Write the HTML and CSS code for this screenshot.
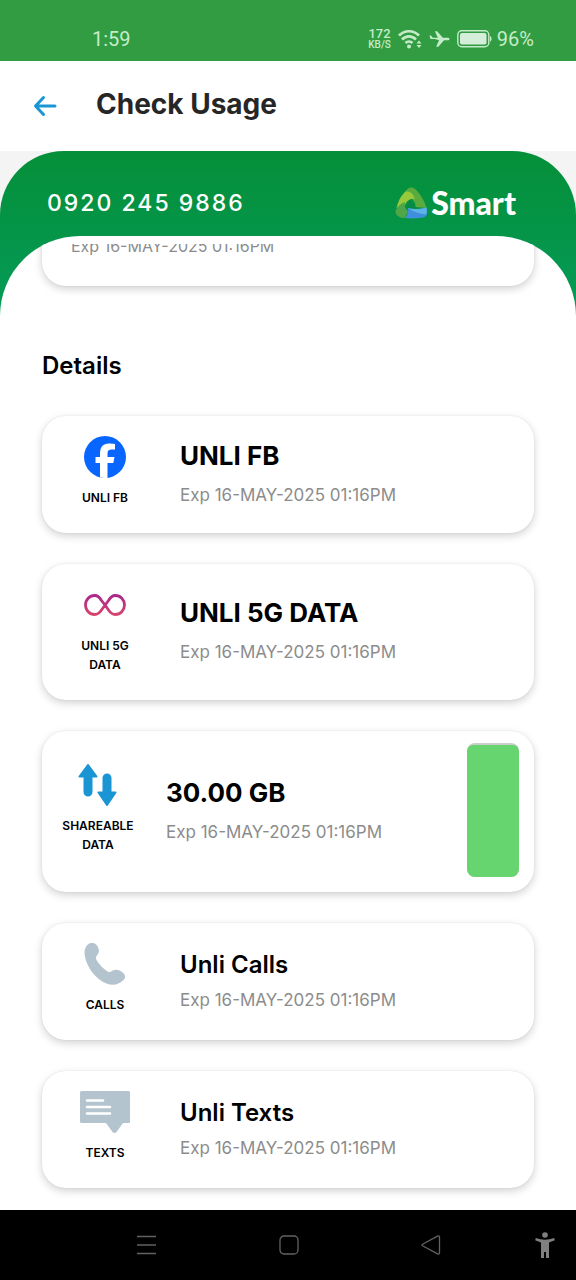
FILE: index.html
```html
<!DOCTYPE html>
<html lang="en">
<head>
<meta charset="utf-8">
<meta name="viewport" content="width=device-width, initial-scale=1">
<title>Check Usage</title>
<link rel="stylesheet" href="styles.css">
</head>
<body>
<div class="status">
  <span class="clock">1:59</span>
  <div class="indicators">
    <span class="speed"><b>172</b><small>KB/S</small></span>
    <svg class="wifi" viewBox="0 0 24 20" aria-hidden="true">
      <g fill="none" stroke="currentColor" stroke-width="2.700">
        <path d="M1 6.500C6.500.8 15.500.8 21 6.500"/>
        <path d="M4 10.500c4-4.200 10-4.200 14 0"/>
        <path d="M7.500 14c2-2 5-2 7 0"/>
      </g>
      <circle cx="11" cy="17.500" r="2" fill="currentColor"/>
      <path d="M18.500 14.500l2.500-3 2.500 3zM18.500 16l2.500 3 2.500-3z" fill="currentColor"/>
    </svg>
    <svg class="plane" viewBox="0 0 22 18" aria-hidden="true">
      <path d="M21.500 9c0-1-.9-1.400-2-1.400h-5L8.500.8H6.200l3 6.800H4L2 5.400H.5L1.500 9H5.500q3 .6 5 1.200l-3 7h2.300l6-6.800h3.700c1.100 0 2-.4 2-1.400z" fill="currentColor"/>
    </svg>
    <svg class="battery" viewBox="0 0 36 18" aria-hidden="true">
      <rect x=".8" y=".8" width="31" height="16" rx="4" fill="none" stroke="currentColor" stroke-width="1.400"/>
      <rect x="3" y="3" width="26.500" height="11.600" rx="2" fill="#d5eed9"/>
      <path d="M33 6c2 .6 2 5 0 5.600z" fill="currentColor"/>
    </svg>
    <span class="percent">96%</span>
  </div>
</div>

<header class="appbar">
  <button class="back" aria-label="Back">
    <svg viewBox="0 0 24 24" aria-hidden="true"><path d="M22 12H3M10.500 3.500L2.500 12l8 8.500" fill="none" stroke="currentColor" stroke-width="3" stroke-linecap="round" stroke-linejoin="round"/></svg>
  </button>
  <h1>Check Usage</h1>
</header>

<main class="backdrop">
  <div class="panel">
    <div class="account">
      <span class="number">0920 245 9886</span>
      <span class="brand">
        <svg viewBox="0 0 32 32" aria-hidden="true">
          <path d="M9 6C12 2 14 .5 16 .5c3 0 5 2 7 4.500 4 5 7 10 8.500 16l-11-1C21 16 18 12 15 11z" fill="#5aab3d"/>
          <path d="M9 6c3-3 7-1 9 2l2 4c-5-1-8 2-10 6L1.500 21C3 15 5 10 9 6z" fill="#98c83c"/>
          <path d="M10 15c-1 4 0 7 3 9l-3 7C5 31 1 29 .5 25.500.5 21 5 17 10 15z" fill="#4fa649"/>
          <path d="M13 21c6 2 12 1 18.500-.5C33 27 32 30 27 30.800c-6 .9-12 .9-17 .2 2-2 3-5 3-10z" fill="#3f8fdc"/>
          <path d="M13 21c6 2 12 1 18.500-.5.5 3 .5 5-.5 7-7-.5-12-2.500-18-6.500z" fill="#5db2e6"/>
          <path d="M15.500 13.500l5.500 7.500q-5 .8-9-.5 1-4.500 3.500-7z" fill="#078a43"/>
        </svg>
        <strong>Smart</strong>
      </span>
    </div>
    <div class="sheet">
      <div class="scroller">
        <section class="card summary"><p class="expiry">Exp 16-MAY-2025 01:16PM</p></section>
        <h2>Details</h2>
        <ul class="cards">
          <li class="card">
            <div class="kind">
              <svg viewBox="0 0 42 42" aria-hidden="true"><circle cx="21" cy="21" r="21" fill="#0866ff"/><path d="M16 41.500V27h-4.500v-6H16v-3.500C16 11 19 7.500 25 7.500c2.500 0 4.500.2 6 .6v5.400h-3.500c-3 0-4 1.200-4 4V21h7l-1.200 6h-5.800v14.800c-2.500.4-5 .2-7.500-.3z" fill="#fff"/></svg>
              <span>UNLI FB</span>
            </div>
            <div class="info"><h3>UNLI FB</h3><p class="expiry">Exp 16-MAY-2025 01:16PM</p></div>
          </li>
          <li class="card">
            <div class="kind">
              <svg viewBox="0 0 42 42" aria-hidden="true">
                <defs><linearGradient id="loop" gradientUnits="userSpaceOnUse" x1="0" y1="10" x2="0" y2="32"><stop offset="0" stop-color="#a8268c"/><stop offset="1" stop-color="#d9466b"/></linearGradient></defs>
                <path d="M21 21L17.500 16.500C15.500 13 13.500 11.500 10.700 11.500a9.200 9.500 0 0 0 0 19c2.800 0 4.800-1.500 6.800-4.500l7-9.500c2-3.500 4-5 6.800-5a9.200 9.500 0 0 1 0 19c-2.800 0-4.800-1.500-6.800-4.500z" fill="none" stroke="url(#loop)" stroke-width="2.800"/>
              </svg>
              <span>UNLI 5G DATA</span>
            </div>
            <div class="info"><h3>UNLI 5G DATA</h3><p class="expiry">Exp 16-MAY-2025 01:16PM</p></div>
          </li>
          <li class="card metered">
            <div class="kind">
              <svg viewBox="0 0 42 42" aria-hidden="true"><g fill="#1b95d3" stroke="#1b95d3" stroke-width="2" stroke-linejoin="round"><path d="M11 1L2.500 12.500H7.500V28a3.500 3.500 0 0 0 7 0V12.500h5z"/><path d="M30 41l-8.500-12.500h5V14a3.500 3.500 0 0 1 7 0v14.500h5z"/></g></svg>
              <span>SHAREABLE DATA</span>
            </div>
            <div class="info"><h3>30.00 GB</h3><p class="expiry">Exp 16-MAY-2025 01:16PM</p></div>
            <div class="meter" role="img" aria-label="Data remaining"><div class="level"></div></div>
          </li>
          <li class="card">
            <div class="kind">
              <svg viewBox="0 0 42 42" aria-hidden="true"><path d="M4.500 1C7.500-1 11 0 13 2.500c2.500 3.500 2.500 6.500.5 9-1.500 2-2 3.500-1 5.500 3 5 7 9 11 11.500 1.500 1 3 .5 4.500-.5 3-2 6.500-1.500 10 1 3.500 2.500 4 5.500 1.500 8-4.500 4.500-10.500 6-17 3.500C12 36.500 3.500 25 1 14 0 9 .5 4 4.500 1z" fill="#b3c4cf"/></svg>
              <span>CALLS</span>
            </div>
            <div class="info"><h3 class="light">Unli Calls</h3><p class="expiry">Exp 16-MAY-2025 01:16PM</p></div>
          </li>
          <li class="card">
            <div class="kind">
              <svg class="wide" viewBox="0 0 50 42" aria-hidden="true"><path d="M1.500 0h47A1.500 1.500 0 0 1 50 1.500v29a1.500 1.500 0 0 1-1.500 1.500H43l-6.500 9q-2 2-4 0L26 32H1.500A1.500 1.500 0 0 1 0 30.500v-29A1.500 1.500 0 0 1 1.500 0z" fill="#b3c4cf"/><path d="M7 9.500h16M7 16h23M7 22.500h23" stroke="#fff" stroke-width="2.600" stroke-linecap="round"/></svg>
              <span>TEXTS</span>
            </div>
            <div class="info"><h3 class="light">Unli Texts</h3><p class="expiry">Exp 16-MAY-2025 01:16PM</p></div>
          </li>
        </ul>
      </div>
    </div>
  </div>
</main>

<nav class="system">
  <button aria-label="Recent apps"><svg viewBox="0 0 20 20" aria-hidden="true"><path d="M0 1.500h19M0 10h19M0 18.500h19" stroke="#626262" stroke-width="1.500"/></svg></button>
  <button aria-label="Home"><svg viewBox="0 0 20 20" aria-hidden="true"><rect x="1" y="1" width="18" height="18" rx="4" fill="none" stroke="#626262" stroke-width="1.300"/></svg></button>
  <button aria-label="Back"><svg viewBox="0 0 20 20" aria-hidden="true"><path d="M1.500 9.200L16.500 1.200q2-.8 2 1v15.600q0 1.800-2 1L1.500 10.800q-1.200-.8 0-1.600z" fill="none" stroke="#626262" stroke-width="1.300"/></svg></button>
  <button class="assist" aria-label="Accessibility"><svg viewBox="0 0 20 26" aria-hidden="true"><g fill="#808080"><circle cx="10" cy="3" r="2.800"/><path d="M.8 6Q10 9.500 19.200 6l.6 2.300-5.800 2.100V26h-3v-6H9v6H6V10.400L.2 8.300z"/></g></svg></button>
</nav>
</body>
</html>
```
FILE: styles.css
```css
* {
  box-sizing: border-box;
}

body {
  margin: 0;
  min-height: 100vh;
  display: flex;
  flex-direction: column;
  background: #fff;
  color: #000;
  font-family: Inter, "Liberation Sans", sans-serif;
}

h1, h2, h3, p, ul {
  margin: 0;
  padding: 0;
}

button {
  border: 0;
  padding: 0;
  background: none;
}

svg {
  display: block;
}

/* Phone status bar */
.status {
  display: flex;
  justify-content: space-between;
  align-items: center;
  padding: 27px 42px 10px 92px;
  background: #329c42;
  color: #c5ecc8;
  font-family: Roboto, sans-serif;
  font-size: 20px;
  line-height: 24px;
}

.indicators {
  display: flex;
  align-items: center;
  gap: 7px;
}

.speed {
  display: flex;
  flex-direction: column;
  align-items: center;
}

.speed b {
  font-size: 13px;
  line-height: 12px;
  font-weight: 500;
}

.speed small {
  font-size: 10px;
  line-height: 10px;
  font-weight: 500;
}

.wifi {
  width: 24px;
  height: 20px;
}

.plane {
  width: 21px;
  height: 18px;
}

.battery {
  width: 36px;
  height: 18px;
}

.percent {
  margin-left: -3px;
}

/* Title bar */
.appbar {
  display: flex;
  align-items: center;
  gap: 39px;
  padding: 23px 33px 27px;
}

.back {
  width: 24px;
  padding-top: 4px;
  color: #1b95d3;
}

.back svg {
  width: 24px;
  height: 24px;
}

h1 {
  font-size: 28px;
  line-height: 40px;
  font-weight: 700;
  color: #262626;
}

/* Green account panel */
.backdrop {
  flex: 1;
  display: flex;
  background: linear-gradient(#f4f4f4, #f4f4f4) top / 100% 80px no-repeat;
}

.panel {
  flex: 1;
  display: flex;
  flex-direction: column;
  border-radius: 64px 64px 0 0;
  background: linear-gradient(#058f38, #049b59) top / 100% 166px no-repeat;
}

.account {
  display: flex;
  justify-content: space-between;
  align-items: center;
  padding: 34px 60px 15px 47px;
  color: #fff;
}

.number {
  font-size: 23px;
  line-height: 36px;
  font-weight: 500;
  letter-spacing: 2px;
}

.brand {
  display: flex;
  align-items: center;
  gap: 4px;
}

.brand svg {
  width: 32px;
  height: 32px;
}

.brand strong {
  font-family: Lato, sans-serif;
  font-size: 32px;
  line-height: 32px;
  font-weight: 900;
}

.sheet {
  flex: 1;
  padding-top: 8px;
  border-radius: 80px 80px 0 0;
  background: #fff;
  overflow: hidden;
}

.scroller {
  padding: 0 42px 22px;
  overflow: hidden;
}

h2 {
  padding: 64px 0 34px;
  font-size: 24px;
  line-height: 32px;
  font-weight: 600;
}

.cards {
  display: flex;
  flex-direction: column;
  gap: 31px;
  list-style: none;
}

.card {
  display: flex;
  align-items: center;
  border-radius: 24px;
  background: #fff;
  box-shadow: 0 3px 8px rgba(0, 0, 0, 0.18), 0 0 2px rgba(0, 0, 0, 0.08);
}

/* Scrolled partly out of view */
.summary {
  margin-top: -40px;
  padding: 30px 29px 28px;
}

.summary .expiry {
  font-size: 16px;
}

.kind {
  flex: none;
  width: 126px;
  display: flex;
  flex-direction: column;
  align-items: center;
  gap: 10px;
  padding: 20px 26px 26px;
  font-size: 12px;
  line-height: 19px;
  font-weight: 600;
  text-align: center;
}

.kind svg {
  width: 42px;
  height: 42px;
}

.kind .wide {
  width: 50px;
}

.info {
  flex: 1;
  display: grid;
  gap: 11px;
  padding: 0 0 3px 12px;
}

h3 {
  font-size: 26px;
  line-height: 32px;
  font-weight: 700;
}

h3.light {
  margin-bottom: -4px;
  font-size: 24px;
  font-weight: 600;
}

.expiry {
  font-size: 17px;
  line-height: 24px;
  font-weight: 400;
  color: #8c8c8c;
}

.metered .kind {
  width: 112px;
  padding-left: 12px;
  padding-right: 12px;
}

.meter {
  align-self: stretch;
  min-height: 134px;
  width: 52px;
  margin: 12px 15px 15px 0;
  padding-top: 2px;
  border-radius: 8px;
  background: #c9cfc9;
  overflow: hidden;
}

.level {
  height: 100%;
  border-radius: 6px 6px 0 0;
  background: #66d46f;
}

/* System navigation */
.system {
  display: flex;
  align-items: center;
  gap: 122px;
  padding: 22px 21px 22px 137px;
  background: #000;
}

.system svg {
  width: 20px;
  height: 20px;
}

.system .assist {
  margin-left: -28px;
}

.system .assist svg {
  height: 26px;
}
```
